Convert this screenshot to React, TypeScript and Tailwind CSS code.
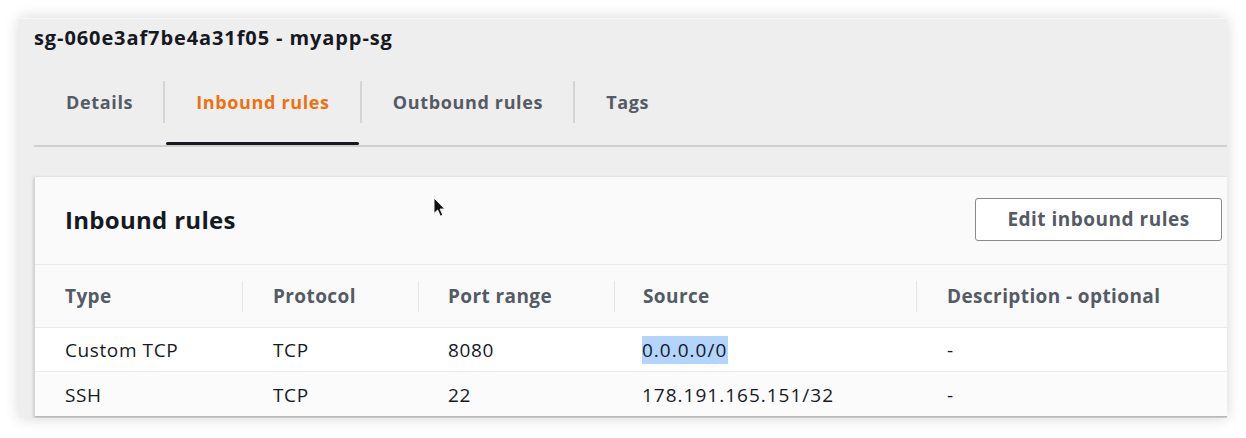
import React from 'react'

const tabs = ['Details', 'Inbound rules', 'Outbound rules', 'Tags']

const rules = [
  { type: 'Custom TCP', protocol: 'TCP', port: '8080', source: '0.0.0.0/0', desc: '-', selected: true },
  { type: 'SSH', protocol: 'TCP', port: '22', source: '178.191.165.151/32', desc: '-', selected: false },
]

const cols = 'grid grid-cols-[207px_176px_196px_302px_1fr]'

export default function App() {
  return (
    <div
      className="w-[1246px] h-[438px] bg-white pt-[18px] pl-[19px] relative overflow-hidden"
      style={{ fontFamily: '"Open Sans", "Noto Sans", sans-serif' }}
    >
      <div className="w-[1208px] h-[400px] bg-[#eeeeee] border-t border-[#f7f7f7] shadow-[0_0_14px_rgba(0,0,0,0.16)] overflow-hidden">
        {/* title */}
        <h1 className="pl-[15px] pt-[6px] text-[20px] leading-[26px] tracking-[0.9px] font-bold text-[#16191f]">
          sg-060e3af7be4a31f05 - myapp-sg
        </h1>

        {/* tabs */}
        <div className="ml-[15px] mt-[10px] h-[86px] flex border-b-2 border-[#d0d0d0]">
          {tabs.map((t, i) => (
            <React.Fragment key={t}>
              {i > 0 && <div className="w-[2px] h-[42px] self-center mt-[-2px] bg-[#d5d5d5]" />}
              <div
                className={
                  'relative flex items-center pr-[30px] text-[18px] tracking-[0.65px] font-bold ' +
                  (i === 0 ? 'pl-[32px] ' : 'pl-[31px] ') +
                  (i === 1 ? 'text-[#ec7211]' : 'text-[#545b64]')
                }
              >
                <span className="mt-[-1px]">{t}</span>
                {i === 1 && (
                  <div className="absolute left-[1px] right-[1px] bottom-[0px] h-[3px] rounded-full bg-[#16191f]" />
                )}
              </div>
            </React.Fragment>
          ))}
        </div>

        {/* card */}
        <div className="ml-[15px] mt-[30px] bg-[#fafafa] border-l border-[#d5d5d5] shadow-[0_1px_3px_rgba(0,0,0,0.25)]">
          <div className="h-[88px] flex items-center justify-between pl-[30px] pr-[5px] border-b border-[#eaeaea]">
            <h2 className="text-[24px] tracking-[0.3px] font-bold text-[#16191f] mt-[-1px]">Inbound rules</h2>
            <button className="h-[43px] w-[247px] mt-[-2px] bg-white border border-[#8a8a8a] rounded-[3px] text-[19px] tracking-[0.5px] font-bold text-[#545b64]">
              Edit inbound rules
            </button>
          </div>

          <div className={cols + ' h-[63px] items-center border-b border-[#eaeaea] text-[19px] tracking-[0.4px] font-bold text-[#545b64]'}>
            <div className="pl-[30px]">Type</div>
            <div className="pl-[30px] border-l border-[#e4e4e4] leading-[31px]">Protocol</div>
            <div className="pl-[29px] border-l border-[#e4e4e4] leading-[31px]">Port range</div>
            <div className="pl-[28px] border-l border-[#e4e4e4] leading-[31px]">Source</div>
            <div className="pl-[30px] border-l border-[#e4e4e4] leading-[31px]">Description - optional</div>
          </div>

          {rules.map((r, i) => (
            <div
              key={r.type}
              className={
                cols +
                ' items-center pt-[2px] text-[19px] tracking-[0.6px] text-[#16191f] ' +
                (i === 0 ? 'h-[44px] bg-white border-b border-[#eaeaea]' : 'h-[45px] bg-[#fbfbfb] border-b border-[#b8b8b8]')
              }
            >
              <div className="pl-[30px]">{r.type}</div>
              <div className="pl-[31px]">{r.protocol}</div>
              <div className="pl-[30px]">{r.port}</div>
              <div className="pl-[28px]">
                <span className={r.selected ? 'inline-block leading-[28px] bg-[#b3d4fc] pr-[1px] tracking-[1px]' : 'tracking-[1px]'}>
                  {r.source}
                </span>
              </div>
              <div className="pl-[31px]">{r.desc}</div>
            </div>
          ))}
        </div>
      </div>

      {/* mouse pointer */}
      <svg className="absolute left-[433px] top-[197px]" width="14" height="21" viewBox="0 0 14 21">
        <path d="M1 1 L1 16.5 L4.6 13 L7.4 19.2 L9.8 18.1 L7.1 12 L11.8 12 Z" fill="#111" stroke="#fff" strokeWidth="0.9" />
      </svg>
    </div>
  )
}
